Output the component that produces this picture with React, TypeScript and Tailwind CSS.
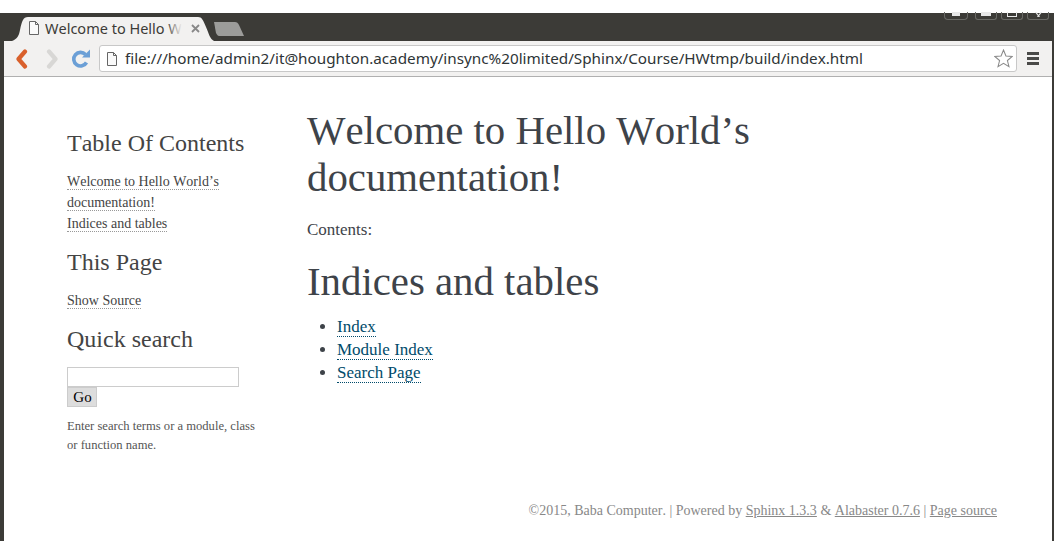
function FileIcon({ className }: { className: string }) {
  return (
    <svg className={className} viewBox="0 0 12 14" fill="none">
      <path d="M1.5 0.5H7.5L10.5 3.5V13.5H1.5Z" fill="#fafafa" stroke="#666" strokeWidth="1" />
      <path d="M7.5 0.5V3.5H10.5" stroke="#666" strokeWidth="1" />
    </svg>
  );
}

function BrowserTabs() {
  return (
    <div className="relative h-[28px] bg-[#3c3b37]">
      <svg className="absolute left-[8px] top-[4px] h-[24px] w-[202px]" viewBox="0 0 202 24">
        <path d="M0 24C5 22 7 19 8 13C10 4 11 0 16 0H186C190 0 191 3 194 10C197 17 198 22 202 24Z" fill="#f2f1f0" />
      </svg>
      <svg className="absolute left-[209px] top-[9px] h-[14px] w-[31px]" viewBox="0 0 31 14">
        <path d="M1 0H22C24 0 25 1 26 3L31 14H6C5 14 4 13 3 11Z" fill="#9c9c9a" />
      </svg>
      <div className="absolute left-[24px] top-[7px] flex items-center">
        <FileIcon className="h-[14px] w-[12px]" />
        <span className="relative ml-[5px] w-[137px] overflow-hidden whitespace-nowrap text-[14.5px] leading-[16px] text-[#3c3b37] [font-family:'Noto_Sans',sans-serif]">
          Welcome to Hello Wo
          <span className="absolute inset-y-0 right-0 w-[16px] bg-gradient-to-r from-transparent to-[#f2f1f0]" />
        </span>
        <svg className="ml-[9px] h-[9px] w-[9px]" viewBox="0 0 9 9" stroke="#888" strokeWidth="1.8">
          <path d="M1 1L8 8M8 1L1 8" />
        </svg>
      </div>
      <div className="absolute right-[3px] top-[-1px] flex gap-[4px]">
        <div className="mr-[3px] flex h-[8px] w-[24px] justify-center rounded-b-[4px] border border-t-0 border-[#6a6a66]">
          <div className="h-[4px] w-[8px] bg-[#e8e8e8]" />
        </div>
        <div className="flex h-[8px] w-[22px] justify-center rounded-b-[3px] border border-t-0 border-[#6a6a66]">
          <div className="h-[4px] w-[10px] bg-[#e8e8e8]" />
        </div>
        <div className="flex h-[8px] w-[22px] justify-center rounded-b-[3px] border border-t-0 border-[#6a6a66]">
          <div className="h-[5px] w-[10px] border border-t-0 border-[#e8e8e8]" />
        </div>
        <div className="flex h-[8px] w-[22px] justify-center rounded-b-[3px] border border-t-0 border-[#6a6a66]">
          <svg className="h-[5px] w-[9px]" viewBox="0 0 9 5" stroke="#e8e8e8" strokeWidth="1.2">
            <path d="M1.5 0L5.5 5M7.5 0L3.5 5" />
          </svg>
        </div>
      </div>
    </div>
  );
}

function Toolbar() {
  return (
    <div className="flex h-[36px] items-center border-b border-[#b0b0b0] bg-[#f2f1f0]">
      <svg className="ml-[11px] h-[20px] w-[13px]" viewBox="0 0 13 20" fill="none">
        <path d="M10 2.5L3.5 10L10 17.5" stroke="#d9602c" strokeWidth="4.2" strokeLinejoin="round" strokeLinecap="round" />
      </svg>
      <svg className="ml-[18px] h-[20px] w-[13px]" viewBox="0 0 13 20" fill="none">
        <path d="M3 2.5L9.5 10L3 17.5" stroke="#d8d7d5" strokeWidth="4.2" strokeLinejoin="round" strokeLinecap="round" />
      </svg>
      <svg className="ml-[12px] h-[20px] w-[20px]" viewBox="0 0 20 20" fill="none">
        <path d="M15.5 13.5A6.8 6.8 0 1 1 14.5 5.5" stroke="#6b9fd6" strokeWidth="3.6" />
        <path d="M11 8.5H19V0.5Z" fill="#6b9fd6" />
      </svg>
      <div className="ml-[8px] flex h-[27px] w-[918px] items-center rounded-[3px] border border-[#c8c8c8] bg-white">
        <FileIcon className="ml-[6px] h-[14px] w-[12px]" />
        <span className="mb-[2px] ml-[7px] whitespace-nowrap text-[15.25px] leading-[20px] text-[#2e3436] [font-family:'Noto_Sans',sans-serif]">
          file:///home/admin2/it@houghton.academy/insync%20limited/Sphinx/Course/HWtmp/build/index.html
        </span>
        <svg className="ml-auto mr-[3px] h-[19px] w-[19px]" viewBox="0 0 18 18" fill="#fff" stroke="#8a8a8a" strokeWidth="1">
          <path d="M9 1L11.3 6.6L17.3 7L12.7 10.9L14.2 16.8L9 13.6L3.8 16.8L5.3 10.9L0.7 7L6.7 6.6Z" />
        </svg>
      </div>
      <div className="ml-[10px] flex w-[12px] flex-col gap-[2px]">
        <div className="h-[3px] bg-[#4a4a48]" />
        <div className="h-[3px] bg-[#4a4a48]" />
        <div className="h-[3px] bg-[#4a4a48]" />
      </div>
    </div>
  );
}

function SideLink({ children }: { children: string }) {
  return <a className="border-b border-dotted border-[#999] text-[#444]">{children}</a>;
}

function Sidebar() {
  return (
    <aside className="ml-[63px] w-[240px] shrink-0 pt-[51px] text-[#444]">
      <h3 className="text-[24px] leading-[31px] text-[#444]">Table Of Contents</h3>
      <div className="mt-[12px] w-[190px] text-[14px] leading-[21px]">
        <SideLink>Welcome to Hello World’s</SideLink> <SideLink>documentation!</SideLink>
        <br />
        <SideLink>Indices and tables</SideLink>
      </div>
      <h3 className="mt-[13px] text-[24px] leading-[31px]">This Page</h3>
      <div className="mt-[12px] text-[14px] leading-[21px]">
        <SideLink>Show Source</SideLink>
      </div>
      <h3 className="mt-[13px] text-[24px] leading-[31px]">Quick search</h3>
      <div className="mt-[12px] h-[20px] w-[172px] border border-[#ccc] bg-white" />
      <button className="flex h-[20px] w-[30px] items-center justify-center border border-[#ccc] bg-[#ddd] pl-[1px] text-[15px] text-black">
        Go
      </button>
      <p className="mt-[10px] w-[192px] text-[12.6px] leading-[19px] text-[#555]">
        Enter search terms or a module, class or function name.
      </p>
    </aside>
  );
}

function MainContent() {
  return (
    <main className="w-[460px] pt-[30px] text-[#3e4349]">
      <h1 className="text-[40.8px] leading-[47px]">Welcome to Hello World’s documentation!</h1>
      <p className="mt-[16px] text-[17px] leading-[26px]">Contents:</p>
      <h2 className="mt-[15px] text-[40.8px] leading-[47px]">Indices and tables</h2>
      <ul className="ml-[30px] mt-[10px] list-disc text-[17px] leading-[23px] marker:text-[#3e4349]">
        {["Index", "Module Index", "Search Page"].map((label) => (
          <li key={label}>
            <a className="border-b border-dotted border-[#004b6b] text-[#004b6b]">{label}</a>
          </li>
        ))}
      </ul>
    </main>
  );
}

function Footer() {
  return (
    <footer className="mr-[55px] mt-auto mb-[20px] text-right text-[14px] leading-[20px] text-[#888]">
      ©2015, Baba Computer. | Powered by <a className="underline">Sphinx 1.3.3</a> &amp;{" "}
      <a className="underline">Alabaster 0.7.6</a> | <a className="underline">Page source</a>
    </footer>
  );
}

export default function App() {
  return (
    <div className="h-[554px] w-[1054px] overflow-hidden bg-white [font-family:'Liberation_Serif',serif] [font-kerning:none]">
      <div className="h-[13px]" />
      <div className="flex h-[528px] flex-col border-l-[4px] border-r-[2px] border-[#3c3b37]">
        <BrowserTabs />
        <Toolbar />
        <div className="flex min-h-0 flex-1 flex-col bg-white">
          <div className="flex">
            <Sidebar />
            <MainContent />
          </div>
          <Footer />
        </div>
      </div>
    </div>
  );
}
